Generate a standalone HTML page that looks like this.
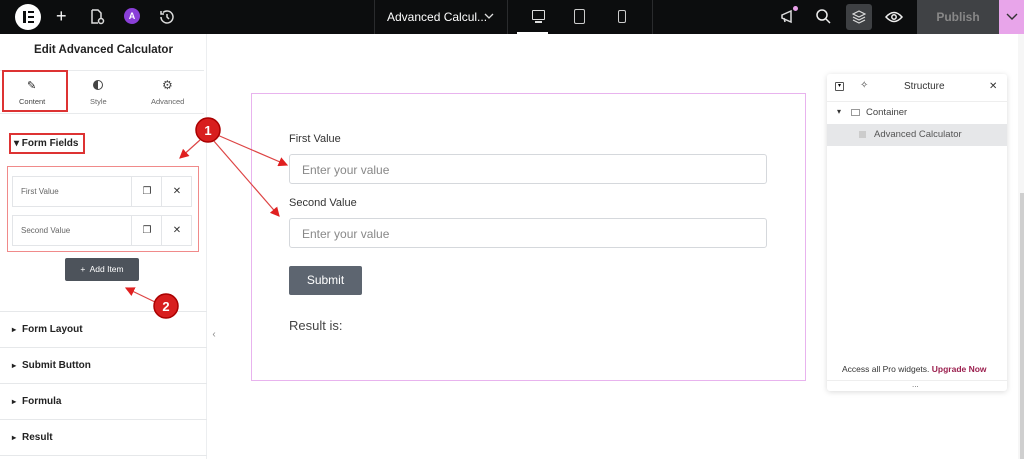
<!DOCTYPE html>
<html><head><style>
*{box-sizing:border-box;margin:0;padding:0}
body{width:1024px;height:459px;overflow:hidden;background:#fff;font-family:"Liberation Sans",sans-serif;position:relative}
.a{position:absolute}
.top{left:0;top:0;width:1024px;height:34px;background:#0c0d0e}
.t{color:#fff}
.sec{left:0;width:207px;height:36px;border-top:1px solid #e6e8ea;font-size:10px;font-weight:bold;color:#222;padding:12px 0 0 12px}
.sec:before{content:"\25B8";font-size:8px;margin-right:6px}
.inp{left:289px;width:478px;height:30px;border:1px solid #d5d8dc;border-radius:3px;font-size:12px;color:#888;padding:8px 12px}
.row{left:12px;width:180px;height:31px;border:1px solid #e3e5e8;font-size:8px;color:#666}
.row span{position:absolute;top:10px;left:8px}
.row i{position:absolute;top:0;width:31px;height:29px;border-left:1px solid #e3e5e8;font-style:normal;text-align:center;line-height:29px;font-size:10px;color:#333}
</style></head><body>
<div class="a top"></div>
<div class="a" style="left:15px;top:4px;width:26px;height:26px;border-radius:50%;background:#fff"></div>
<div class="a" style="left:23px;top:11px;width:3px;height:12px;background:#0c0d0e"></div>
<div class="a" style="left:28px;top:11px;width:6px;height:2px;background:#0c0d0e;box-shadow:0 5px #0c0d0e,0 10px #0c0d0e"></div>
<div class="a t" style="left:56px;top:6px;font-size:18px">+</div>
<svg class="a" style="left:88px;top:8px" width="18" height="18" fill="none" stroke="#ddd" stroke-width="1.5"><path d="M4 2h6l3 3v5M4 2v13h6"/><circle cx="13" cy="13" r="2.5"/></svg>
<div class="a" style="left:124px;top:8px;width:16px;height:16px;border-radius:50%;background:#8a3fd8;color:#fff;font-size:9px;text-align:center;line-height:16px;font-weight:bold">A</div>
<svg class="a" style="left:158px;top:8px" width="18" height="18" fill="none" stroke="#ddd" stroke-width="1.5"><path d="M3 9a6 6 0 1 0 2-4.5M3 3v3h3M9 6v3l2 2"/></svg>
<div class="a" style="left:374px;top:0;width:1px;height:34px;background:#2a2b2d"></div>
<div class="a t" style="left:387px;top:10px;font-size:12px">Advanced Calcul...</div>
<svg class="a" style="left:484px;top:12px" width="10" height="8" fill="none" stroke="#ddd" stroke-width="1.3"><path d="M1 2l4 4 4-4"/></svg>
<div class="a" style="left:507px;top:0;width:1px;height:34px;background:#2a2b2d"></div>
<div class="a" style="left:532px;top:10px;width:13px;height:10px;border:1.5px solid #ddd;border-radius:1px"></div>
<div class="a" style="left:535px;top:21px;width:7px;height:2px;background:#ddd"></div>
<div class="a" style="left:517px;top:32px;width:31px;height:2px;background:#fff"></div>
<div class="a" style="left:574px;top:9px;width:11px;height:15px;border:1.5px solid #ccc;border-radius:2px"></div>
<div class="a" style="left:618px;top:10px;width:8px;height:13px;border:1.5px solid #ccc;border-radius:2px"></div>
<div class="a" style="left:652px;top:0;width:1px;height:34px;background:#2a2b2d"></div>
<svg class="a" style="left:779px;top:7px" width="18" height="18" fill="none" stroke="#ddd" stroke-width="1.5"><path d="M3 8l9-4v11L3 11zM5 11l1 4"/></svg>
<div class="a" style="left:793px;top:6px;width:5px;height:5px;border-radius:50%;background:#e8a0e8"></div>
<svg class="a" style="left:815px;top:8px" width="18" height="18" fill="none" stroke="#eee" stroke-width="1.5"><circle cx="7" cy="7" r="5"/><path d="M11 11l4 4"/></svg>
<div class="a" style="left:846px;top:4px;width:26px;height:26px;border-radius:3px;background:#3e4043"></div>
<svg class="a" style="left:852px;top:10px" width="14" height="14" fill="none" stroke="#ddd" stroke-width="1.2"><path d="M7 1l6 3-6 3-6-3zM1 7l6 3 6-3M1 10l6 3 6-3"/></svg>
<svg class="a" style="left:885px;top:8px" width="18" height="18" fill="none" stroke="#eee" stroke-width="1.5"><path d="M1 9q8-9 16 0q-8 9-16 0z"/><circle cx="9" cy="9" r="2.2"/></svg>
<div class="a" style="left:917px;top:0;width:82px;height:34px;background:#404245;color:#888;font-size:12px;font-weight:bold;text-align:center;line-height:34px">Publish</div>
<div class="a" style="left:999px;top:0;width:25px;height:34px;background:#e8a5ea"></div>
<svg class="a" style="left:1006px;top:13px" width="12" height="8" fill="none" stroke="#333" stroke-width="1.4"><path d="M1 1l5 5 5-5"/></svg>

<div class="a" style="left:0;top:34px;width:207px;height:425px;background:#fff;border-right:1px solid #eceef0"></div>
<div class="a" style="left:0;top:44px;width:207px;text-align:center;font-size:11.5px;font-weight:bold;color:#222">Edit Advanced Calculator</div>
<div class="a" style="left:0;top:70px;width:204px;height:1px;background:#e8eaec"></div>
<div class="a" style="left:2px;top:70px;width:66px;height:42px;border:2px solid #d33"></div>
<div class="a" style="left:27px;top:79px;font-size:11px;color:#222">&#9998;</div>
<div class="a" style="left:19px;top:97px;font-size:7.5px;color:#444">Content</div>
<div class="a" style="left:93px;top:80px;width:10px;height:10px;border-radius:50%;border:1.5px solid #444;background:linear-gradient(90deg,#444 50%,#fff 50%)"></div>
<div class="a" style="left:90px;top:97px;font-size:7.5px;color:#666">Style</div>
<div class="a" style="left:162px;top:78px;font-size:12px;color:#444">&#9881;</div>
<div class="a" style="left:151px;top:97px;font-size:7.5px;color:#666">Advanced</div>
<div class="a" style="left:0;top:113px;width:204px;height:1px;background:#e8eaec"></div>
<div class="a" style="left:9px;top:133px;width:76px;height:21px;border:2px solid #d33;font-size:10px;font-weight:bold;color:#222;padding:3px 0 0 3px">&#9662; Form Fields</div>
<div class="a" style="left:7px;top:166px;width:192px;height:86px;border:1.5px solid #f08a8a"></div>
<div class="a row" style="top:176px"><span>First Value</span><i style="left:118px">&#10064;</i><i style="left:148px">&#10005;</i></div>
<div class="a row" style="top:215px"><span>Second Value</span><i style="left:118px">&#10064;</i><i style="left:148px">&#10005;</i></div>
<div class="a" style="left:65px;top:258px;width:74px;height:23px;background:#4d535b;border-radius:2px;color:#fff;font-size:8.5px;text-align:center;line-height:23px">+&nbsp; Add Item</div>
<div class="a sec" style="top:311px">Form Layout</div>
<div class="a sec" style="top:347px">Submit Button</div>
<div class="a sec" style="top:383px">Formula</div>
<div class="a sec" style="top:419px">Result</div>
<div class="a" style="left:0;top:455px;width:207px;height:1px;background:#e6e8ea"></div>
<div class="a" style="left:208px;top:320px;width:12px;height:30px;background:#fff;color:#888;font-size:10px;text-align:center;line-height:30px">&#8249;</div>

<div class="a" style="left:251px;top:93px;width:555px;height:288px;border:1.5px solid #e8b3ee"></div>
<div class="a" style="left:289px;top:133px;font-size:11px;color:#333">First Value</div>
<div class="a inp" style="top:154px">Enter your value</div>
<div class="a" style="left:289px;top:197px;font-size:11px;color:#333">Second Value</div>
<div class="a inp" style="top:218px">Enter your value</div>
<div class="a" style="left:289px;top:266px;width:73px;height:29px;background:#5d6570;border-radius:2px;color:#fff;font-size:12px;text-align:center;line-height:29px">Submit</div>
<div class="a" style="left:289px;top:318px;font-size:13px;color:#444">Result is:</div>

<div class="a" style="left:827px;top:74px;width:180px;height:317px;background:#fff;box-shadow:0 1px 6px rgba(0,0,0,.15);border-radius:3px"></div>
<div class="a" style="left:835px;top:82px;width:9px;height:9px;border:1px solid #555;border-radius:1px;font-size:6px;text-align:center;line-height:7px">&#9662;</div>
<div class="a" style="left:860px;top:80px;font-size:10px;color:#444">&#10023;</div>
<div class="a" style="left:904px;top:81px;font-size:10px;color:#333">Structure</div>
<div class="a" style="left:989px;top:81px;font-size:10px;color:#333">&#10005;</div>
<div class="a" style="left:827px;top:101px;width:180px;height:1px;background:#eee"></div>
<div class="a" style="left:837px;top:107px;font-size:8px;color:#333">&#9662;</div>
<div class="a" style="left:851px;top:109px;width:9px;height:7px;border:1px solid #999"></div>
<div class="a" style="left:866px;top:107px;font-size:9.5px;color:#444">Container</div>
<div class="a" style="left:827px;top:124px;width:180px;height:22px;background:#e6e7e9"></div>
<div class="a" style="left:859px;top:131px;width:7px;height:7px;background:#ccc"></div>
<div class="a" style="left:874px;top:129px;font-size:9.5px;color:#555">Advanced Calculator</div>
<div class="a" style="left:842px;top:364px;font-size:8.5px;color:#333">Access all Pro widgets. <b style="color:#9b1f4e;font-weight:bold">Upgrade Now</b></div>
<div class="a" style="left:827px;top:380px;width:180px;height:1px;background:#eee"></div>
<div class="a" style="left:912px;top:380px;font-size:8px;color:#666">...</div>
<div class="a" style="left:1018px;top:34px;width:6px;height:425px;background:#f6f6f6"></div>
<div class="a" style="left:1020px;top:193px;width:4px;height:266px;background:#cfcfcf"></div>

<svg class="a" style="left:0;top:0" width="1024" height="459">
<defs><marker id="m" markerWidth="8" markerHeight="8" refX="7" refY="4" orient="auto"><path d="M0,0L8,4L0,8z" fill="#e02020"/></marker></defs>
<g stroke="#d44" stroke-width="1.2" fill="none" marker-end="url(#m)">
<line x1="200" y1="140" x2="180" y2="158"/>
<line x1="215" y1="134" x2="287" y2="165"/>
<line x1="213" y1="140" x2="279" y2="216"/>
<line x1="155" y1="302" x2="126" y2="288"/>
</g>
<circle cx="208" cy="130" r="12" fill="#d81e1e" stroke="#a00" stroke-width="1.5"/>
<text x="208" y="135" fill="#fff" font-size="13" font-weight="bold" text-anchor="middle" font-family="Liberation Sans">1</text>
<circle cx="166" cy="306" r="12" fill="#d81e1e" stroke="#a00" stroke-width="1.5"/>
<text x="166" y="311" fill="#fff" font-size="13" font-weight="bold" text-anchor="middle" font-family="Liberation Sans">2</text>
</svg>
</body></html>
